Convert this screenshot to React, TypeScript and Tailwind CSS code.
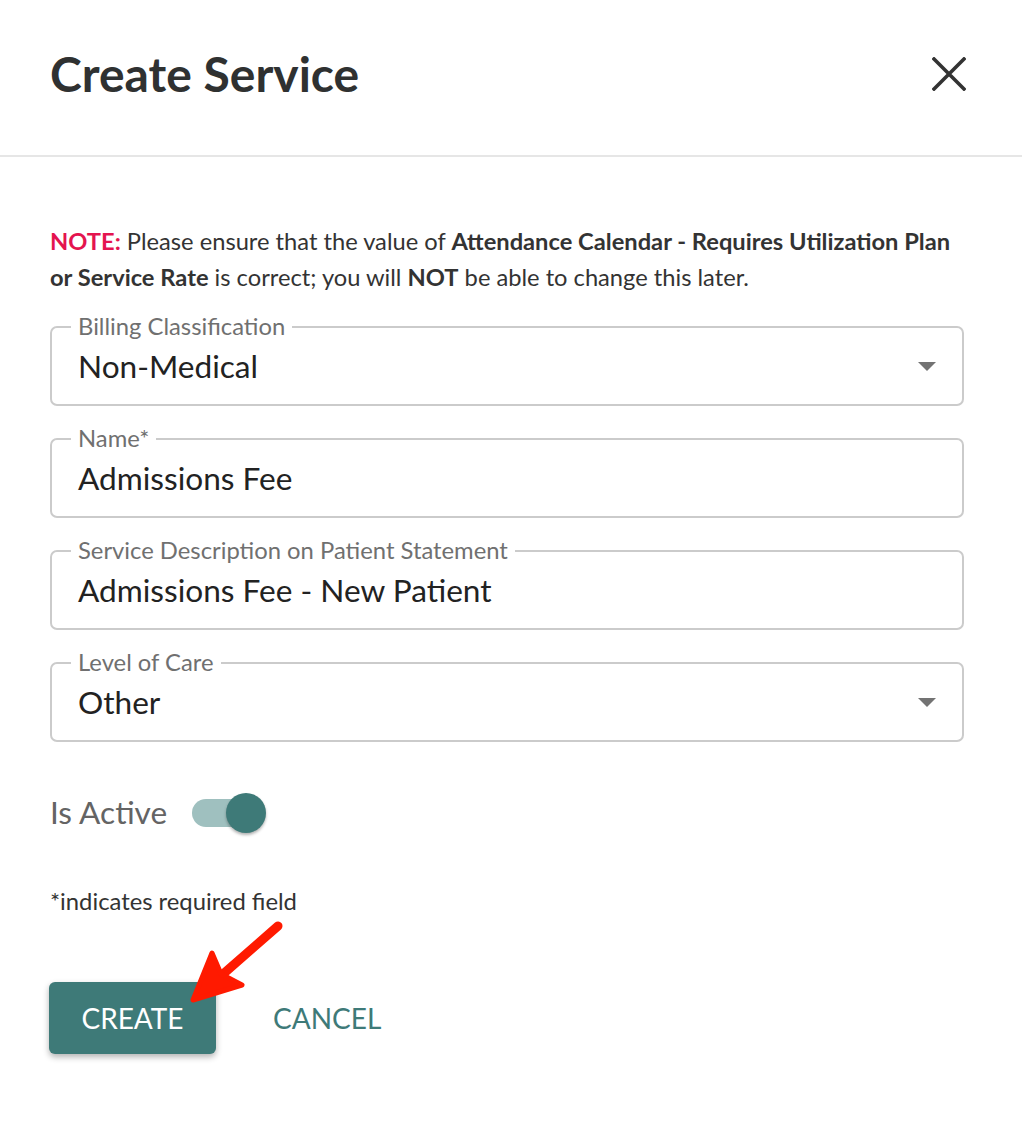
import React from "react";

function Caret() {
  return (
    <svg width="18" height="9" viewBox="0 0 18 9" className="shrink-0">
      <path d="M0 0 L18 0 L9 9 Z" fill="#737373" />
    </svg>
  );
}

function Field({ label, value, select }: { label: string; value: string; select?: boolean }) {
  return (
    <div className="relative flex h-[80px] items-center rounded-[7px] border-2 border-[#cbcbcb] pl-[26px] pr-[26px]">
      <span className="absolute left-[19px] top-[-16px] bg-white px-[7px] text-[23.8px] leading-[28px] text-[#707070]">
        {label}
      </span>
      <span className="flex-1 pt-[2px] text-[31.6px] text-[#222]">{value}</span>
      {select ? <Caret /> : null}
    </div>
  );
}

export default function App() {
  return (
    <div className="relative h-[1148px] w-[1022px] overflow-hidden bg-white font-['Lato',sans-serif]">
      <div className="flex h-[155px] items-center justify-between pb-[8px] pl-[50px] pr-[56px]">
        <h1 className="text-[48px] font-bold leading-none text-[#2f3131]">Create Service</h1>
        <svg width="34" height="34" viewBox="0 0 34 34">
          <path d="M2 2 L32 32 M32 2 L2 32" stroke="#333" strokeWidth="3.6" strokeLinecap="square" />
        </svg>
      </div>
      <div className="border-b-2 border-[#e6e6e6]" />

      <div className="pl-[50px] pr-[58px]">
        <p className="mt-[66px] text-[23.7px] leading-[36px] text-[#333]">
          <span className="font-bold text-[#e4144f]">NOTE:</span> Please ensure that the value of{" "}
          <span className="font-bold">Attendance Calendar - Requires Utilization Plan or Service Rate</span> is correct;
          you will <span className="font-bold">NOT</span> be able to change this later.
        </p>

        <div className="mt-[31px] flex flex-col gap-[32px]">
          <Field label="Billing Classification" value="Non-Medical" select />
          <Field label="Name*" value="Admissions Fee" />
          <Field label="Service Description on Patient Statement" value="Admissions Fee - New Patient" />
          <Field label="Level of Care" value="Other" select />
        </div>

        <div className="mt-[51px] flex h-[40px] items-center gap-[25px]">
          <span className="text-[31.6px] text-[#646464]">Is Active</span>
          <div className="relative h-[40px] w-[74px]">
            <div className="absolute left-0 top-[6px] h-[28px] w-[66px] rounded-full bg-[#9fc0bf]" />
            <div className="absolute right-0 top-0 h-[40px] w-[40px] rounded-full bg-[#3e7a78] shadow-[0_2px_3px_rgba(0,0,0,0.3)]" />
          </div>
        </div>

        <p className="mt-[53px] text-[23.8px] leading-[30px] text-[#333]">*indicates required field</p>

        <div className="mt-[66px] flex items-center gap-[57px]">
          <button className="-ml-px h-[72px] w-[167px] rounded-[6px] bg-[#3e7a78] text-[28px] text-white shadow-[0_3px_6px_rgba(0,0,0,0.3)]">
            CREATE
          </button>
          <button className="text-[28px] text-[#3e7a78]">CANCEL</button>
        </div>
      </div>

      <svg className="pointer-events-none absolute left-0 top-0" width="1022" height="1148">
        <path d="M278 926 L214 982" stroke="#ff1a00" strokeWidth="9" strokeLinecap="round" />
        <path
          d="M193 1000 L212 953 L221 974 L242 985 Z"
          fill="#ff1a00"
          stroke="#ff1a00"
          strokeWidth="5"
          strokeLinejoin="round"
        />
      </svg>
    </div>
  );
}
